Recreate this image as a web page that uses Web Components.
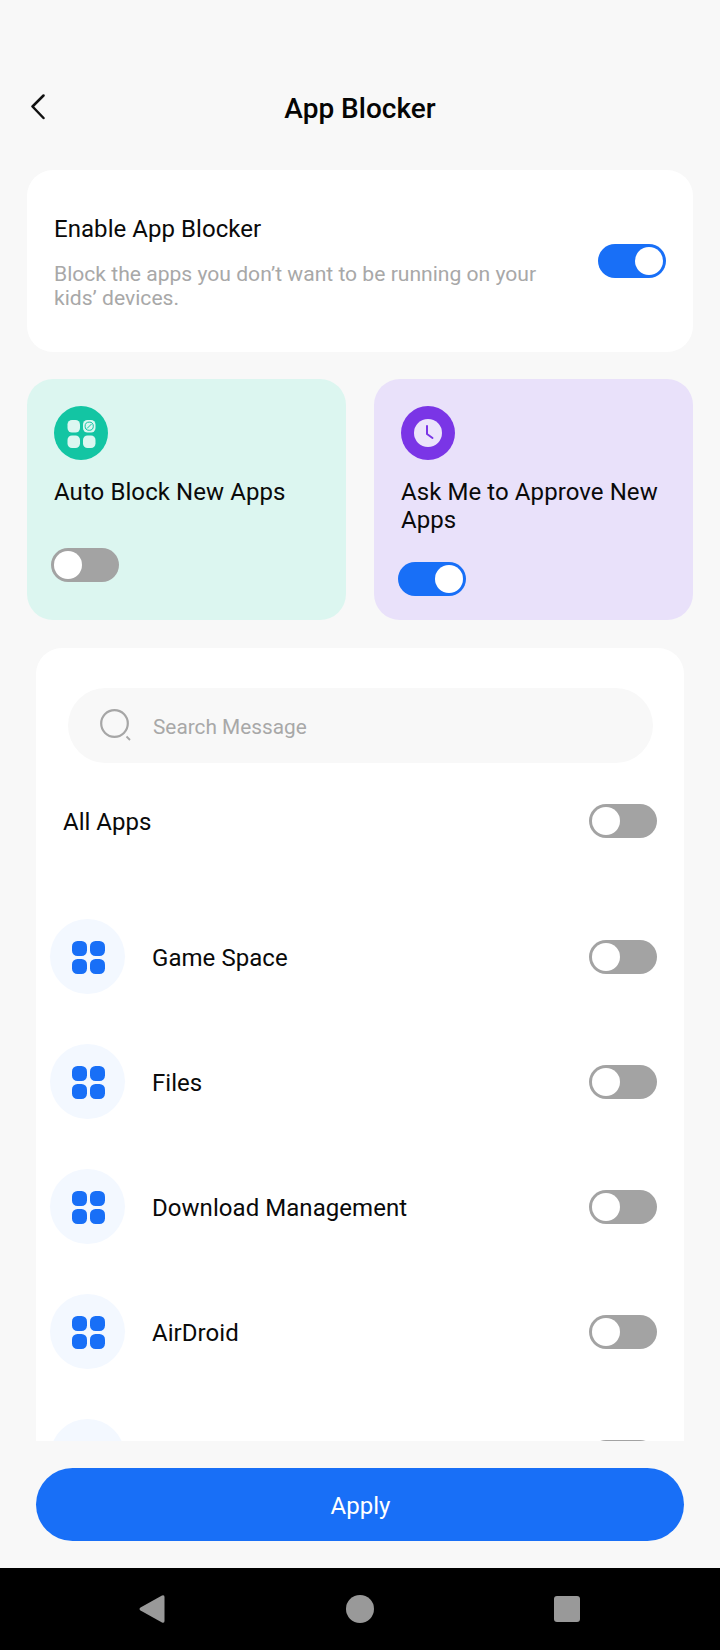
<!DOCTYPE html>
<html lang="en"><head><meta charset="utf-8"><title>App Blocker</title>
<style>
html,body{margin:0;padding:0;background:#f8f8f8;font-family:Roboto,"Liberation Sans",sans-serif;color:#0a0a0a}
</style></head><body>
<app-screen>
  <page-header>App Blocker</page-header>
  <scroll-area>
    <settings-card heading="Enable App Blocker">Block the apps you don’t want to be running on your kids’ devices.</settings-card>
    <feature-row>
      <feature-card kind="auto">Auto Block New Apps</feature-card>
      <feature-card kind="ask" on>Ask Me to Approve New Apps</feature-card>
    </feature-row>
    <list-card>
      <search-box>Search Message</search-box>
      <all-row>All Apps</all-row>
      <app-row>Game Space</app-row>
      <app-row>Files</app-row>
      <app-row>Download Management</app-row>
      <app-row>AirDroid</app-row>
      <app-row></app-row>
    </list-card>
  </scroll-area>
  <action-bar>Apply</action-bar>
  <nav-bar></nav-bar>
</app-screen>
<script>
function def(name, html){
  customElements.define(name, class extends HTMLElement{
    connectedCallback(){
      if(this.shadowRoot) return;
      const r=this.attachShadow({mode:'open'});
      r.innerHTML=typeof html==='function'?html(this):html;
    }
  });
}
def('x-toggle', h=>`<style>
:host{display:inline-block;width:68px;height:34px;flex:none}
.t{box-sizing:border-box;width:100%;height:100%;border-radius:17px;padding:3px;display:flex;background:#a3a3a3;justify-content:flex-start}
:host([on]) .t{background:#186ff7;justify-content:flex-end}
.k{width:28px;height:28px;border-radius:50%;background:#fff}
</style><div class="t"><div class="k"></div></div>`);
def('app-screen',`<style>:host{display:flex;flex-direction:column;width:720px;height:1650px;overflow:hidden;background:#f8f8f8}</style><slot></slot>`);
def('page-header',`<style>
:host{display:grid;grid-template-columns:1fr auto 1fr;align-items:center;height:66px;padding:74px 0 30px;box-sizing:content-box;flex:none}
svg{display:block;margin-left:30px;margin-top:-2px}
.t{font-size:28px;font-weight:500;line-height:66px;color:#050505;margin-top:2px}
</style><svg width="16" height="26" viewBox="0 0 16 26"><path d="M13.5 1.5 2.5 12.5 13.5 24" fill="none" stroke="#111" stroke-width="2.5" stroke-linecap="round" stroke-linejoin="round"/></svg><div class="t"><slot></slot></div><div></div>`);
def('scroll-area',`<style>:host{display:flex;flex-direction:column;gap:27px;height:1271px;overflow:hidden;flex:none;padding:0 27px;box-sizing:border-box}</style><slot></slot>`);
def('settings-card',h=>`<style>
:host{display:flex;align-items:center;justify-content:space-between;height:182px;flex:none;background:#fff;border-radius:26px;padding:0 27px;box-sizing:border-box}
.x{width:490px;margin-top:3px}
.h{font-size:24px;line-height:28px;color:#0a0a0a;letter-spacing:.05px}
.d{font-size:21.1px;line-height:24px;color:#a8a8a8;margin-top:19px}
</style><div class="x"><div class="h">${h.getAttribute('heading')}</div><div class="d"><slot></slot></div></div><x-toggle on></x-toggle>`);
def('feature-row',`<style>:host{display:grid;grid-template-columns:319px 319px;gap:28px;height:241px;flex:none}</style><slot></slot>`);
const ICONS={
 auto:`<svg width="54" height="54" viewBox="0 0 54 54"><circle cx="27" cy="27" r="27" fill="#13c5a3"/><g fill="#dcf7f1"><rect x="13.5" y="14" width="12.5" height="12.5" rx="4.500"/><rect x="29" y="14" width="12.5" height="12.5" rx="4.500"/><rect x="13.5" y="29.500" width="12.5" height="12.5" rx="4.500"/><rect x="29" y="29.500" width="12.500" height="12.500" rx="4.500"/></g><circle cx="35.200" cy="20.200" r="4.100" fill="none" stroke="#13c5a3" stroke-width="1"/><path d="M33 22.500 37.500 18" stroke="#13c5a3" stroke-width="1"/></svg>`,
 ask:`<svg width="54" height="54" viewBox="0 0 54 54"><circle cx="27" cy="27" r="27" fill="#7a35e6"/><circle cx="27" cy="27" r="14" fill="#ece4fb"/><path d="M26 20v8l5.500 4" fill="none" stroke="#7a35e6" stroke-width="2" stroke-linecap="round" stroke-linejoin="round"/></svg>`};
def('feature-card',h=>`<style>
:host{display:flex;flex-direction:column;border-radius:26px;padding:27px 27px 0;box-sizing:border-box;background:${h.getAttribute('kind')==='ask'?'#e9e1fa':'#dcf6f0'}}
svg{display:block;flex:none}
.t{font-size:24px;line-height:28px;margin-top:18px;color:#0a0a0a;letter-spacing:.08px}
.w{flex:1;display:flex;align-items:center;margin-left:-3px;padding-top:3px}
</style>${ICONS[h.getAttribute('kind')]}<div class="t"><slot></slot></div><div class="w"><x-toggle ${h.hasAttribute('on')?'on':''}></x-toggle></div>`);
def('list-card',`<style>:host{display:flex;flex-direction:column;flex:none;margin:1px 9px 0;background:#fff;border-radius:26px 26px 0 0;padding:40px 27px 0 14px;gap:50px;box-sizing:border-box}</style><slot></slot>`);
def('search-box',`<style>
:host{display:flex;align-items:center;height:75px;margin:0 4px -9px 18px;background:#f8f8f8;border-radius:37.500px;padding-left:32px;box-sizing:border-box;color:#a8a8a8;font-size:20.800px}
svg{display:block;margin:-2px 22px 0 0}
.s{margin-top:2px}
</style><svg width="31" height="32" viewBox="0 0 31 32"><circle cx="14.500" cy="14.500" r="13.300" fill="none" stroke="#a6a6a6" stroke-width="2.200"/><path d="M26.500 27.500 30 31" stroke="#a6a6a6" stroke-width="1.800"/></svg><span class="s"><slot></slot></span>`);
def('all-row',`<style>
:host{display:flex;align-items:center;justify-content:space-between;height:34px;padding-left:13px;font-size:24px;margin-bottom:31px}
.s{margin-top:2px}
</style><span class="s"><slot></slot></span><x-toggle></x-toggle>`);
def('app-row',`<style>
:host{display:flex;align-items:center;height:75px;flex:none;font-size:24px;letter-spacing:.05px}
.c{width:75px;height:75px;border-radius:50%;background:#f3f8ff;display:flex;align-items:center;justify-content:center;margin-right:27px;flex:none}
svg{display:block;margin:2px 0 0 1px}
.n{flex:1;margin-top:2px}
</style><div class="c"><svg width="33" height="33" viewBox="0 0 33 33"><g fill="#186ff7"><rect x="0" y="0" width="15" height="15" rx="5.500"/><rect x="18" y="0" width="15" height="15" rx="5.500"/><rect x="0" y="18" width="15" height="15" rx="5.500"/><rect x="18" y="18" width="15" height="15" rx="5.500"/></g></svg></div><div class="n"><slot></slot></div><x-toggle></x-toggle>`);
def('action-bar',`<style>
:host{display:block;flex:none;padding:27px 36px}
.b{height:73px;border-radius:36.500px;background:#186ff7;color:#fff;font-size:24px;display:flex;align-items:center;justify-content:center}
.s{margin:2px 0 0 1px}
</style><div class="b"><span class="s"><slot></slot></span></div>`);
def('nav-bar',`<style>
:host{display:flex;flex:none;height:82px;background:#000;align-items:center;justify-content:center;gap:180px;padding-right:2px;box-sizing:border-box}
svg{display:block}
</style><svg width="28" height="30" viewBox="0 0 28 30"><path d="M24 1.500Q26.500.5 26.500 3V27Q26.500 29.500 24 28.500L2.500 16.500Q.5 15 2.500 13.500Z" fill="#999"/></svg><svg width="28" height="28" viewBox="0 0 28 28"><circle cx="14" cy="14" r="14" fill="#999"/></svg><svg width="26" height="26" viewBox="0 0 26 26"><rect width="26" height="26" rx="3" fill="#999"/></svg>`);
</script>
</body></html>
